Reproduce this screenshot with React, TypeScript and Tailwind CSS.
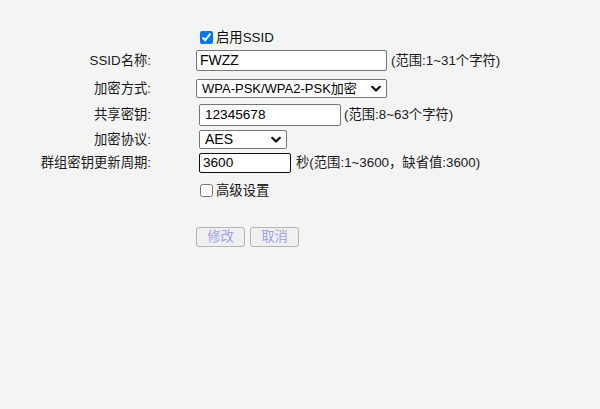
import React from "react";

const font = {
  fontFamily: '"Liberation Sans", "Noto Sans CJK SC", sans-serif',
};

function Chevron() {
  return (
    <svg width="10" height="7" viewBox="0 0 10 7" className="pointer-events-none absolute right-[5px] top-1/2 -translate-y-1/2">
      <path d="M1.2 1.2 L5 5 L8.8 1.2" fill="none" stroke="#111" strokeWidth="2.2" strokeLinecap="round" strokeLinejoin="round" />
    </svg>
  );
}

function Row({ label, mt, h, children }: { label?: string; mt: string; h: string; children: React.ReactNode }) {
  return (
    <div className={`flex items-center ${mt} ${h}`}>
      <div className="w-[151px] shrink-0 text-right text-[13.33px] text-[#1a1a1a]">{label}</div>
      <div className="ml-[45px] flex items-center">{children}</div>
    </div>
  );
}

export default function App() {
  return (
    <div className="h-[409px] w-[600px] bg-[#f4f4f4] pt-[31px]" style={font}>
      <Row mt="mt-0" h="h-[13px]">
        <label className="ml-[4px] flex items-center gap-[3px] text-[13.33px] text-[#111]">
          <input type="checkbox" defaultChecked className="m-0 h-[13px] w-[13px] accent-[#0075ff]" />
          <span>启用SSID</span>
        </label>
      </Row>
      <Row label="SSID名称:" mt="mt-[6px]" h="h-[21px]">
        <div className="flex h-[21px] w-[191px] items-center rounded-[2px] border border-[#767676] bg-white pl-[3px] text-[14px] text-black">
          FWZZ
        </div>
        <span className="ml-[4px] text-[13.33px] text-[#1a1a1a]">(范围:1~31个字符)</span>
      </Row>
      <Row label="加密方式:" mt="mt-[8px]" h="h-[19px]">
        <div className="relative flex h-[19px] w-[191px] items-center rounded-[2px] border border-[#767676] bg-white pl-[5px] text-[13px] text-black">
          WPA-PSK/WPA2-PSK加密
          <Chevron />
        </div>
      </Row>
      <Row label="共享密钥:" mt="mt-[6px]" h="h-[22px]">
        <div className="ml-[3px] flex h-[22px] w-[142px] items-center rounded-[2px] border border-[#767676] bg-white pl-[5px] text-[13.6px] text-black">
          12345678
        </div>
        <span className="ml-[3px] text-[13.33px] text-[#1a1a1a]">(范围:8~63个字符)</span>
      </Row>
      <Row label="加密协议:" mt="mt-[4px]" h="h-[19px]">
        <div className="relative ml-[3px] flex h-[19px] w-[88px] items-center rounded-[2px] border border-[#767676] bg-white pl-[5px] text-[14px] text-black">
          AES
          <Chevron />
        </div>
      </Row>
      <Row label="群组密钥更新周期:" mt="mt-[4px]" h="h-[20px]">
        <div className="ml-[3px] flex h-[20px] w-[92px] items-center rounded-[2px] border border-[#111] bg-white pl-[3px] text-[13.6px] text-black">
          3600
        </div>
        <span className="ml-[5px] text-[13.33px] text-[#1a1a1a]">秒(范围:1~3600，缺省值:3600)</span>
      </Row>
      <Row mt="mt-[11px]" h="h-[13px]">
        <label className="ml-[4px] flex items-center gap-[3px] text-[13.33px] text-[#111]">
          <input type="checkbox" className="m-0 h-[13px] w-[13px]" />
          <span>高级设置</span>
        </label>
      </Row>
      <Row mt="mt-[30px]" h="h-[20px]">
        <div className="flex gap-[5px]">
          <button className="flex h-[20px] w-[49px] items-center justify-center rounded-[3px] border border-[#b4b4b4] bg-[#f0f0f0] text-[13.33px] text-[#a09ff2]">
            修改
          </button>
          <button className="flex h-[20px] w-[49px] items-center justify-center rounded-[3px] border border-[#b4b4b4] bg-[#f0f0f0] text-[13.33px] text-[#a09ff2]">
            取消
          </button>
        </div>
      </Row>
    </div>
  );
}
